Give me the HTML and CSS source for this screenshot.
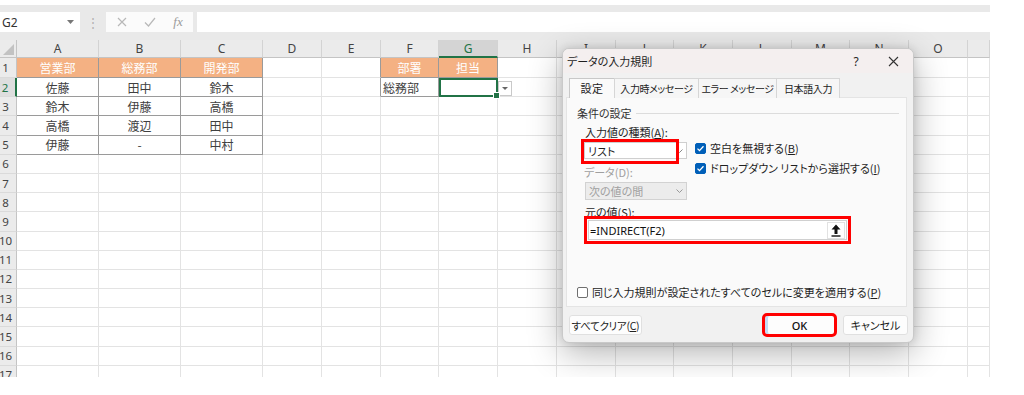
FILE: index.html
```html
<!doctype html>
<html lang="ja">
<head>
    <meta charset="UTF-8">
    <title>データの入力規則</title>
    <link rel="stylesheet" href="styles.css">
</head>
<body>

<div class="excel">
    <div class="formula-bar">
        <div class="name-box">
            <span>G2</span>
            <svg class="nb-arrow" width="7" height="4" viewBox="0 0 7 4"><path d="M0 0h7L3.5 4z" fill="#777"/></svg>
        </div>
        <div class="fb-dots">⋮</div>
        <div class="fb-btns">
            <span><svg width="10" height="10" viewBox="0 0 10 10"><path d="M1 1l8 8M9 1l-8 8" stroke="#b8b8b8" stroke-width="1.2"/></svg></span>
            <span><svg width="12" height="10" viewBox="0 0 12 10"><path d="M1 5.5l3.5 3.5L11 1" fill="none" stroke="#b8b8b8" stroke-width="1.2"/></svg></span>
            <span class="fx">fx</span>
        </div>
        <div class="fb-input"></div>
    </div>

    <div class="sheet">
        <div class="ch corner"></div><div class="ch">A</div><div class="ch">B</div><div class="ch">C</div><div class="ch">D</div><div class="ch">E</div><div class="ch">F</div><div class="ch sel-col">G</div><div class="ch">H</div><div class="ch">I</div><div class="ch">J</div><div class="ch">K</div><div class="ch">L</div><div class="ch">M</div><div class="ch">N</div><div class="ch">O</div><div class="ch"></div>

        <div class="rh">1</div><div class="t h">営業部</div><div class="t h">総務部</div><div class="t h">開発部</div><div></div><div class="tr"></div><div class="t h">部署</div><div class="t h">担当</div><div></div><div></div><div></div><div></div><div></div><div></div><div></div><div></div><div></div>
        <div class="rh sel-row">2</div><div class="t">佐藤</div><div class="t">田中</div><div class="t">鈴木</div><div></div><div class="tr"></div><div class="t left">総務部</div><div class="t sel"><span class="dd"><svg width="6" height="3" viewBox="0 0 6 3"><path d="M0 0h6L3 3z" fill="#666"/></svg></span></div><div></div><div></div><div></div><div></div><div></div><div></div><div></div><div></div><div></div>
        <div class="rh">3</div><div class="t">鈴木</div><div class="t">伊藤</div><div class="t">高橋</div><div></div><div></div><div></div><div></div><div></div><div></div><div></div><div></div><div></div><div></div><div></div><div></div><div></div>
        <div class="rh">4</div><div class="t">高橋</div><div class="t">渡辺</div><div class="t">田中</div><div></div><div></div><div></div><div></div><div></div><div></div><div></div><div></div><div></div><div></div><div></div><div></div><div></div>
        <div class="rh">5</div><div class="t">伊藤</div><div class="t">-</div><div class="t">中村</div><div></div><div></div><div></div><div></div><div></div><div></div><div></div><div></div><div></div><div></div><div></div><div></div><div></div>
        <div class="rh">6</div><div></div><div></div><div></div><div></div><div></div><div></div><div></div><div></div><div></div><div></div><div></div><div></div><div></div><div></div><div></div><div></div>
        <div class="rh">7</div><div></div><div></div><div></div><div></div><div></div><div></div><div></div><div></div><div></div><div></div><div></div><div></div><div></div><div></div><div></div><div></div>
        <div class="rh">8</div><div></div><div></div><div></div><div></div><div></div><div></div><div></div><div></div><div></div><div></div><div></div><div></div><div></div><div></div><div></div><div></div>
        <div class="rh">9</div><div></div><div></div><div></div><div></div><div></div><div></div><div></div><div></div><div></div><div></div><div></div><div></div><div></div><div></div><div></div><div></div>
        <div class="rh">10</div><div></div><div></div><div></div><div></div><div></div><div></div><div></div><div></div><div></div><div></div><div></div><div></div><div></div><div></div><div></div><div></div>
        <div class="rh">11</div><div></div><div></div><div></div><div></div><div></div><div></div><div></div><div></div><div></div><div></div><div></div><div></div><div></div><div></div><div></div><div></div>
        <div class="rh">12</div><div></div><div></div><div></div><div></div><div></div><div></div><div></div><div></div><div></div><div></div><div></div><div></div><div></div><div></div><div></div><div></div>
        <div class="rh">13</div><div></div><div></div><div></div><div></div><div></div><div></div><div></div><div></div><div></div><div></div><div></div><div></div><div></div><div></div><div></div><div></div>
        <div class="rh">14</div><div></div><div></div><div></div><div></div><div></div><div></div><div></div><div></div><div></div><div></div><div></div><div></div><div></div><div></div><div></div><div></div>
        <div class="rh">15</div><div></div><div></div><div></div><div></div><div></div><div></div><div></div><div></div><div></div><div></div><div></div><div></div><div></div><div></div><div></div><div></div>
        <div class="rh">16</div><div></div><div></div><div></div><div></div><div></div><div></div><div></div><div></div><div></div><div></div><div></div><div></div><div></div><div></div><div></div><div></div>
        <div class="rh">17</div><div></div><div></div><div></div><div></div><div></div><div></div><div></div><div></div><div></div><div></div><div></div><div></div><div></div><div></div><div></div><div></div>
    </div>

    <div class="dialog">
        <div class="dlg-title">
            <span>データの入力規則</span>
            <span class="dlg-help">?</span>
            <span class="dlg-close"><svg width="11" height="11" viewBox="0 0 11 11"><path d="M1 1l9 9M10 1l-9 9" stroke="#333" stroke-width="1.1"/></svg></span>
        </div>
        <div class="tabs">
            <span class="tab active">設定</span>
            <span class="tab w84">入力時メッセージ</span>
            <span class="tab w78">エラー メッセージ</span>
            <span class="tab w63">日本語入力</span>
        </div>
        <div class="panel">
            <div class="legend">条件の設定</div>
            <div class="label">入力値の種類(<u>A</u>):</div>
            <div class="type-grid">
                <div class="type-left">
                    <div class="select">
                        <span>リスト</span>
                        <svg width="7" height="4" viewBox="0 0 7 4"><path d="M0.5 0.5l3 3 3-3" fill="none" stroke="#888"/></svg>
                        <span class="mark"></span>
                    </div>
                    <div class="label dim">データ(D):</div>
                    <div class="select disabled">
                        <span>次の値の間</span>
                        <svg width="7" height="4" viewBox="0 0 7 4"><path d="M0.5 0.5l3 3 3-3" fill="none" stroke="#999"/></svg>
                    </div>
                </div>
                <div class="checks">
                    <div class="check"><span class="box on"><svg width="9" height="9" viewBox="0 0 9 9"><path d="M1.5 4.6l2 2 4-4.4" fill="none" stroke="#fff" stroke-width="1.3"/></svg></span>空白を無視する(<u>B</u>)</div>
                    <div class="check"><span class="box on"><svg width="9" height="9" viewBox="0 0 9 9"><path d="M1.5 4.6l2 2 4-4.4" fill="none" stroke="#fff" stroke-width="1.3"/></svg></span>ドロップダウン リストから選択する(<u>I</u>)</div>
                </div>
            </div>
            <div class="label">元の値(<u>S</u>):</div>
            <div class="source">
                <span>=INDIRECT(F2)</span>
                <span class="src-btn"><svg width="10" height="13" viewBox="0 0 10 13"><path d="M5 0.5L9.5 5.5H6.5V10H3.5V5.5H0.5z" fill="#111"/><rect x="0.5" y="11.3" width="9" height="1.4" fill="#111"/></svg></span>
            </div>
            <div class="check apply"><span class="box"></span>同じ入力規則が設定されたすべてのセルに変更を適用する(<u>P</u>)</div>
        </div>
        <div class="dlg-foot">
            <span class="btn clear">すべてクリア(<u>C</u>)</span>
            <span class="btn ok">OK</span>
            <span class="btn cancel">キャンセル</span>
        </div>
    </div>
</div>

</body>
</html>
```

FILE: styles.css
```css
* {
    margin: 0;
    padding: 0;
    box-sizing: border-box;
}

body {
    font-family: "Noto Sans CJK JP", "Noto Sans", sans-serif;
    background-color: #ffffff;
    color: #333;
}

.excel {
    position: relative;
    width: 990px;
    height: 372px;
    margin-top: 5px;
    overflow: hidden;
    background-color: #fff;
}

/* formula bar */

.formula-bar {
    display: flex;
    align-items: flex-start;
    height: 35px;
    padding-top: 7px;
    background-color: #e9e9e9;
}

.name-box {
    display: flex;
    align-items: center;
    justify-content: space-between;
    width: 80px;
    height: 20px;
    padding: 0 6px 0 2px;
    background-color: #fff;
    font-family: "Noto Sans", sans-serif;
    font-size: 12px;
    color: #333;
}

.fb-dots {
    width: 26px;
    height: 20px;
    line-height: 20px;
    text-align: center;
    font-size: 12px;
    color: #b0b0b0;
}

.fb-btns {
    display: flex;
    width: 87px;
    height: 20px;
    padding-left: 2px;
    background-color: #fbfbfb;
}

.fb-btns span {
    display: flex;
    align-items: center;
    justify-content: center;
    width: 28px;
    height: 20px;
}

.fb-btns .fx {
    font-family: "Liberation Serif", serif;
    font-style: italic;
    font-size: 13px;
    color: #9a9a9a;
}

.fb-input {
    flex: 1;
    height: 20px;
    margin-left: 4px;
    background-color: #fff;
}

/* grid */

.sheet {
    display: grid;
    grid-template-columns: 17px 82px 82px 82px 59px 59px 58px 59px 59px 59px 58px 59px 59px 58px 59px 59px 22px;
    grid-template-rows: 18px 20px;
    grid-auto-rows: 19.2px;
    height: 337px;
    overflow: hidden;
}

.sheet > div {
    display: flex;
    align-items: center;
    justify-content: center;
    border-right: 1px solid #e3e3e3;
    border-bottom: 1px solid #e3e3e3;
    font-size: 12px;
    color: #404040;
}

.sheet .ch {
    background-color: #ebebeb;
    border-right-color: #d3d3d3;
    border-bottom-color: #c4c4c4;
    font-family: "Noto Sans", sans-serif;
    font-size: 12px;
    color: #444;
}

.sheet .corner {
    position: relative;
    border-right-color: #c4c4c4;
}

.sheet .corner::after {
    content: "";
    position: absolute;
    right: 2px;
    bottom: 2px;
    border-style: solid;
    border-width: 0 0 11px 11px;
    border-color: transparent transparent #c2c2c2 transparent;
}

.sheet .sel-col {
    background-color: #d4d4d4;
    border-bottom: 2px solid #217346;
    color: #217346;
}

.sheet .rh {
    justify-content: center;
    padding-right: 5px;
    background-color: #ebebeb;
    border-right-color: #c4c4c4;
    border-bottom-color: #dadada;
    font-family: "Noto Sans", sans-serif;
    font-size: 11.5px;
    color: #444;
}

.sheet .sel-row {
    background-color: #dedede;
    border-right: 2px solid #217346;
    color: #217346;
}

.sheet .t {
    border-right-color: #9a9a9a;
    border-bottom-color: #9a9a9a;
}

.sheet .tr {
    border-right-color: #9a9a9a;
}

.sheet .h {
    background-color: #f4b183;
    color: #fff;
}

.sheet .left {
    justify-content: flex-start;
    padding-left: 2px;
}

.sheet .sel {
    position: relative;
    outline: 2px solid #217346;
    outline-offset: -2px;
}

.sheet .sel::after {
    content: "";
    position: absolute;
    right: -3px;
    bottom: -3px;
    width: 5px;
    height: 5px;
    background-color: #217346;
    border: 1px solid #fff;
}

.sheet .dd {
    position: absolute;
    left: 100%;
    top: 3px;
    display: flex;
    align-items: center;
    justify-content: center;
    width: 14px;
    height: 15px;
    margin-left: 1px;
    background-color: #fff;
    border: 1px solid #c9c9c9;
}

/* dialog */

.dialog {
    position: absolute;
    left: 562px;
    top: 43px;
    width: 352px;
    height: 295px;
    background-color: #f1f1f1;
    border: 1px solid #c9c9c9;
    border-radius: 7px;
    box-shadow: 0 10px 34px rgba(0, 0, 0, 0.3), 0 0 8px rgba(0, 0, 0, 0.12);
    font-size: 11px;
    font-feature-settings: "palt";
    color: #1f1f1f;
    white-space: nowrap;
    overflow: hidden;
}

.dlg-title {
    display: flex;
    align-items: center;
    height: 24px;
    padding-left: 4px;
    background-color: #f4efef;
}

.dlg-help {
    width: 20px;
    margin-left: auto;
    text-align: center;
    font-family: "Noto Sans", sans-serif;
    font-size: 12px;
}

.dlg-close {
    display: flex;
    justify-content: center;
    width: 20px;
    margin: 0 10px 0 17px;
}

.tabs {
    position: relative;
    z-index: 1;
    display: flex;
    height: 20px;
    margin-top: 5px;
    padding-left: 6px;
}

.tab {
    width: 84px;
    height: 20px;
    line-height: 19px;
    margin-right: -1px;
    overflow: hidden;
    text-align: center;
    background-color: #f6f6f6;
    border: 1px solid #d6d6d6;
    border-bottom: none;
    font-size: 10px;
    letter-spacing: -0.4px;
    color: #222;
}

.tab.active {
    width: 46px;
    background-color: #fafafa;
    border-color: #c8c8c8;
    font-size: 11px;
    letter-spacing: 0.5px;
}

.tab.w84 {
    width: 85px;
}

.tab.w78 {
    width: 79px;
}

.tab.w63 {
    width: 64px;
}

.panel {
    width: 341px;
    height: 210px;
    margin: -1px 0 0 3px;
    padding: 8px 7px 0 10px;
    background-color: #fafafa;
    border: 1px solid #e4e4e4;
}

.legend {
    display: flex;
    align-items: center;
    height: 14px;
    line-height: 14px;
    color: #333;
}

.legend::after {
    content: "";
    flex: 1;
    height: 1px;
    margin-left: 4px;
    background-color: #dcdcdc;
}

.label {
    height: 14px;
    line-height: 14px;
    margin-top: 5px;
    padding-left: 8px;
}

.label.dim {
    margin-top: 6px;
    padding-left: 0;
    color: #a0a0a0;
}

.type-grid {
    display: flex;
    align-items: flex-start;
    margin-top: 3px;
    padding-left: 7px;
}

.type-left {
    width: 103px;
}

.select {
    position: relative;
    display: flex;
    align-items: center;
    justify-content: space-between;
    width: 103px;
    height: 17px;
    padding: 0 3px 0 3px;
    background-color: #fff;
    border: 1px solid #cfcfcf;
}

.select .mark {
    position: absolute;
    left: -4px;
    top: -4px;
    width: 98px;
    height: 25px;
    border: 3px solid #ff0000;
}

.select.disabled {
    width: 102px;
    height: 18px;
    margin: 3px 0 0 1px;
    background-color: #ececec;
    border-color: #d2d2d2;
    color: #a0a0a0;
}

.checks {
    margin: -4px 0 0 8px;
}

.check {
    display: flex;
    align-items: center;
    height: 20px;
}

.box {
    display: flex;
    align-items: center;
    justify-content: center;
    width: 11px;
    height: 11px;
    margin-right: 4px;
    background-color: #fff;
    border: 1px solid #6f6f6f;
    border-radius: 2px;
}

.box.on {
    background-color: #005fb8;
    border-color: #005fb8;
}

.source {
    display: flex;
    align-items: center;
    justify-content: space-between;
    width: 259px;
    height: 20px;
    margin: 1px 0 0 11px;
    padding: 0 1px 0 1px;
    background-color: #fff;
    border: 1px solid #d0d0d0;
    outline: 3px solid #ff0000;
    outline-offset: 1px;
    font-family: "Noto Sans", sans-serif;
    font-size: 11px;
    color: #111;
}

.src-btn {
    display: flex;
    align-items: center;
    justify-content: center;
    width: 18px;
    height: 17px;
    border: 1px solid #e2e2e2;
}

.check.apply {
    margin-top: 42px;
}

.dlg-foot {
    display: flex;
    padding: 8px 5px 0 6px;
}

.btn {
    display: flex;
    align-items: center;
    justify-content: center;
    height: 20px;
    background-color: #fdfdfd;
    border: 1px solid #e0e0e0;
    border-radius: 3px;
    color: #222;
}

.btn.clear {
    width: 73px;
    font-size: 10.5px;
    letter-spacing: -0.3px;
}

.btn.ok {
    width: 71px;
    margin-left: auto;
    outline: 3px solid #ff0000;
    outline-offset: -1px;
    box-shadow: inset 3px 0 0 #c4dbf3;
    font-family: "Noto Sans", sans-serif;
    font-weight: 500;
    color: #111;
}

.btn.cancel {
    width: 65px;
    margin-left: 8px;
}
```
